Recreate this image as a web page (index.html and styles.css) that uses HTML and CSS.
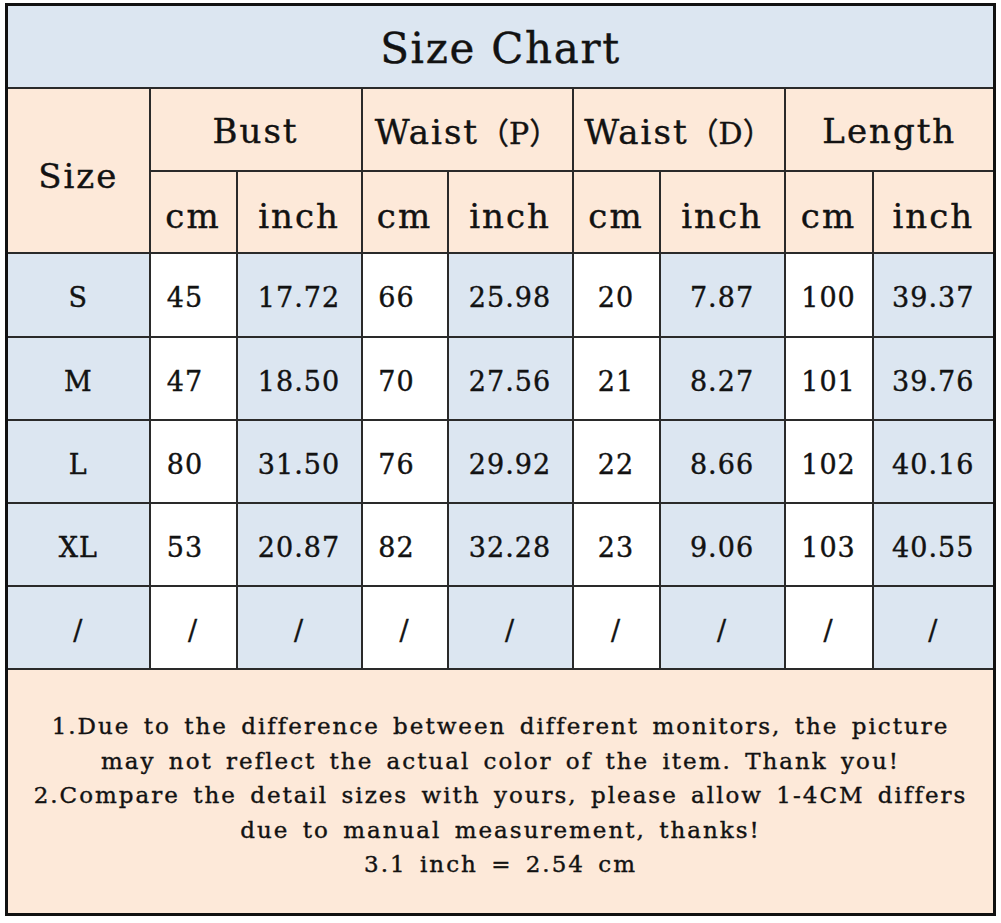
FILE: index.html
```html
<!DOCTYPE html>
<html lang="en">
<head>
<meta charset="utf-8">
<title>Size Chart</title>
<link rel="stylesheet" href="styles.css">
</head>
<body>
<table class="chart">
  <colgroup>
    <col class="c-size">
    <col class="c-cm1"><col class="c-in">
    <col class="c-cm2"><col class="c-in">
    <col class="c-cm1"><col class="c-in">
    <col class="c-cm3"><col class="c-in9">
  </colgroup>
  <tr class="r-title">
    <td colspan="9" class="title">Size Chart</td>
  </tr>
  <tr class="r-head1">
    <td rowspan="2" class="head size-head">Size</td>
    <td colspan="2" class="head group">Bust</td>
    <td colspan="2" class="head group">Waist<span class="paren">（P）</span></td>
    <td colspan="2" class="head group">Waist<span class="paren">（D）</span></td>
    <td colspan="2" class="head group">Length</td>
  </tr>
  <tr class="r-head2">
    <td class="head unit">cm</td><td class="head unit">inch</td>
    <td class="head unit">cm</td><td class="head unit">inch</td>
    <td class="head unit">cm</td><td class="head unit">inch</td>
    <td class="head unit">cm</td><td class="head unit">inch</td>
  </tr>
  <tr class="r-data first">
    <td class="blue size">S</td>
    <td class="white shift">45</td><td class="blue">17.72</td>
    <td class="white shift">66</td><td class="blue">25.98</td>
    <td class="white">20</td><td class="blue">7.87</td>
    <td class="white">100</td><td class="blue">39.37</td>
  </tr>
  <tr class="r-data">
    <td class="blue size">M</td>
    <td class="white shift">47</td><td class="blue">18.50</td>
    <td class="white shift">70</td><td class="blue">27.56</td>
    <td class="white">21</td><td class="blue">8.27</td>
    <td class="white">101</td><td class="blue">39.76</td>
  </tr>
  <tr class="r-data">
    <td class="blue size">L</td>
    <td class="white shift">80</td><td class="blue">31.50</td>
    <td class="white shift">76</td><td class="blue">29.92</td>
    <td class="white">22</td><td class="blue">8.66</td>
    <td class="white">102</td><td class="blue">40.16</td>
  </tr>
  <tr class="r-data">
    <td class="blue size">XL</td>
    <td class="white shift">53</td><td class="blue">20.87</td>
    <td class="white shift">82</td><td class="blue">32.28</td>
    <td class="white">23</td><td class="blue">9.06</td>
    <td class="white">103</td><td class="blue">40.55</td>
  </tr>
  <tr class="r-data">
    <td class="blue">/</td>
    <td class="white">/</td><td class="blue">/</td>
    <td class="white">/</td><td class="blue">/</td>
    <td class="white">/</td><td class="blue">/</td>
    <td class="white">/</td><td class="blue">/</td>
  </tr>
  <tr class="r-notes">
    <td colspan="9" class="notes">
      <p>1.Due to the difference between different monitors, the picture<br>may not reflect the actual color of the item. Thank you!<br>2.Compare the detail sizes with yours, please allow 1-4CM differs<br>due to manual measurement, thanks!<br>3.1 inch = 2.54 cm</p>
    </td>
  </tr>
</table>
</body>
</html>
```
FILE: styles.css
```css
html, body {
  margin: 0;
  padding: 0;
  background: #ffffff;
}

body {
  font-family: "DejaVu Serif", "Noto Sans CJK SC", serif;
  color: #121212;
}

.chart {
  margin: 3px 0 0 5px;
  width: 991px;
  table-layout: fixed;
  border-collapse: collapse;
  border: 3px solid #111111;
}

.c-size { width: 143px; }
.c-cm1 { width: 87px; }
.c-cm2 { width: 86px; }
.c-cm3 { width: 88px; }
.c-in { width: 125px; }
.c-in9 { width: 122px; }

.chart td {
  border: 2px solid #2a2a2a;
  padding: 0;
  text-align: center;
  vertical-align: middle;
  white-space: nowrap;
  -webkit-text-stroke: 0.4px #121212;
}

.r-title { height: 83px; }
.r-head1 { height: 83px; }
.r-head2 { height: 82px; }
.r-data { height: 83px; }
.r-data.first { height: 84px; }
.r-notes { height: 246px; }

.chart .title {
  background: #dce6f1;
  font-size: 42px;
  letter-spacing: 1.7px;
  padding-top: 4px;
}

.chart .head {
  background: #fde9d9;
  font-size: 34px;
  letter-spacing: 2px;
}

.chart .size-head {
  padding-top: 11px;
}

.chart .unit {
  padding-top: 8px;
}

.chart .group {
  padding-top: 4px;
}

.paren {
  font-size: 30px;
  letter-spacing: 0;
}

.chart .r-data td {
  font-size: 27px;
  letter-spacing: 1px;
  padding-top: 6px;
}

.blue { background: #dce6f1; }
.white { background: #ffffff; }

.chart .r-data .shift {
  padding-right: 16px;
}

.chart .notes {
  background: #fde9d9;
  font-size: 23px;
  padding-top: 8px;
}

.notes p {
  margin: 0;
  line-height: 34.5px;
  letter-spacing: 2px;
  word-spacing: 4px;
}
```
